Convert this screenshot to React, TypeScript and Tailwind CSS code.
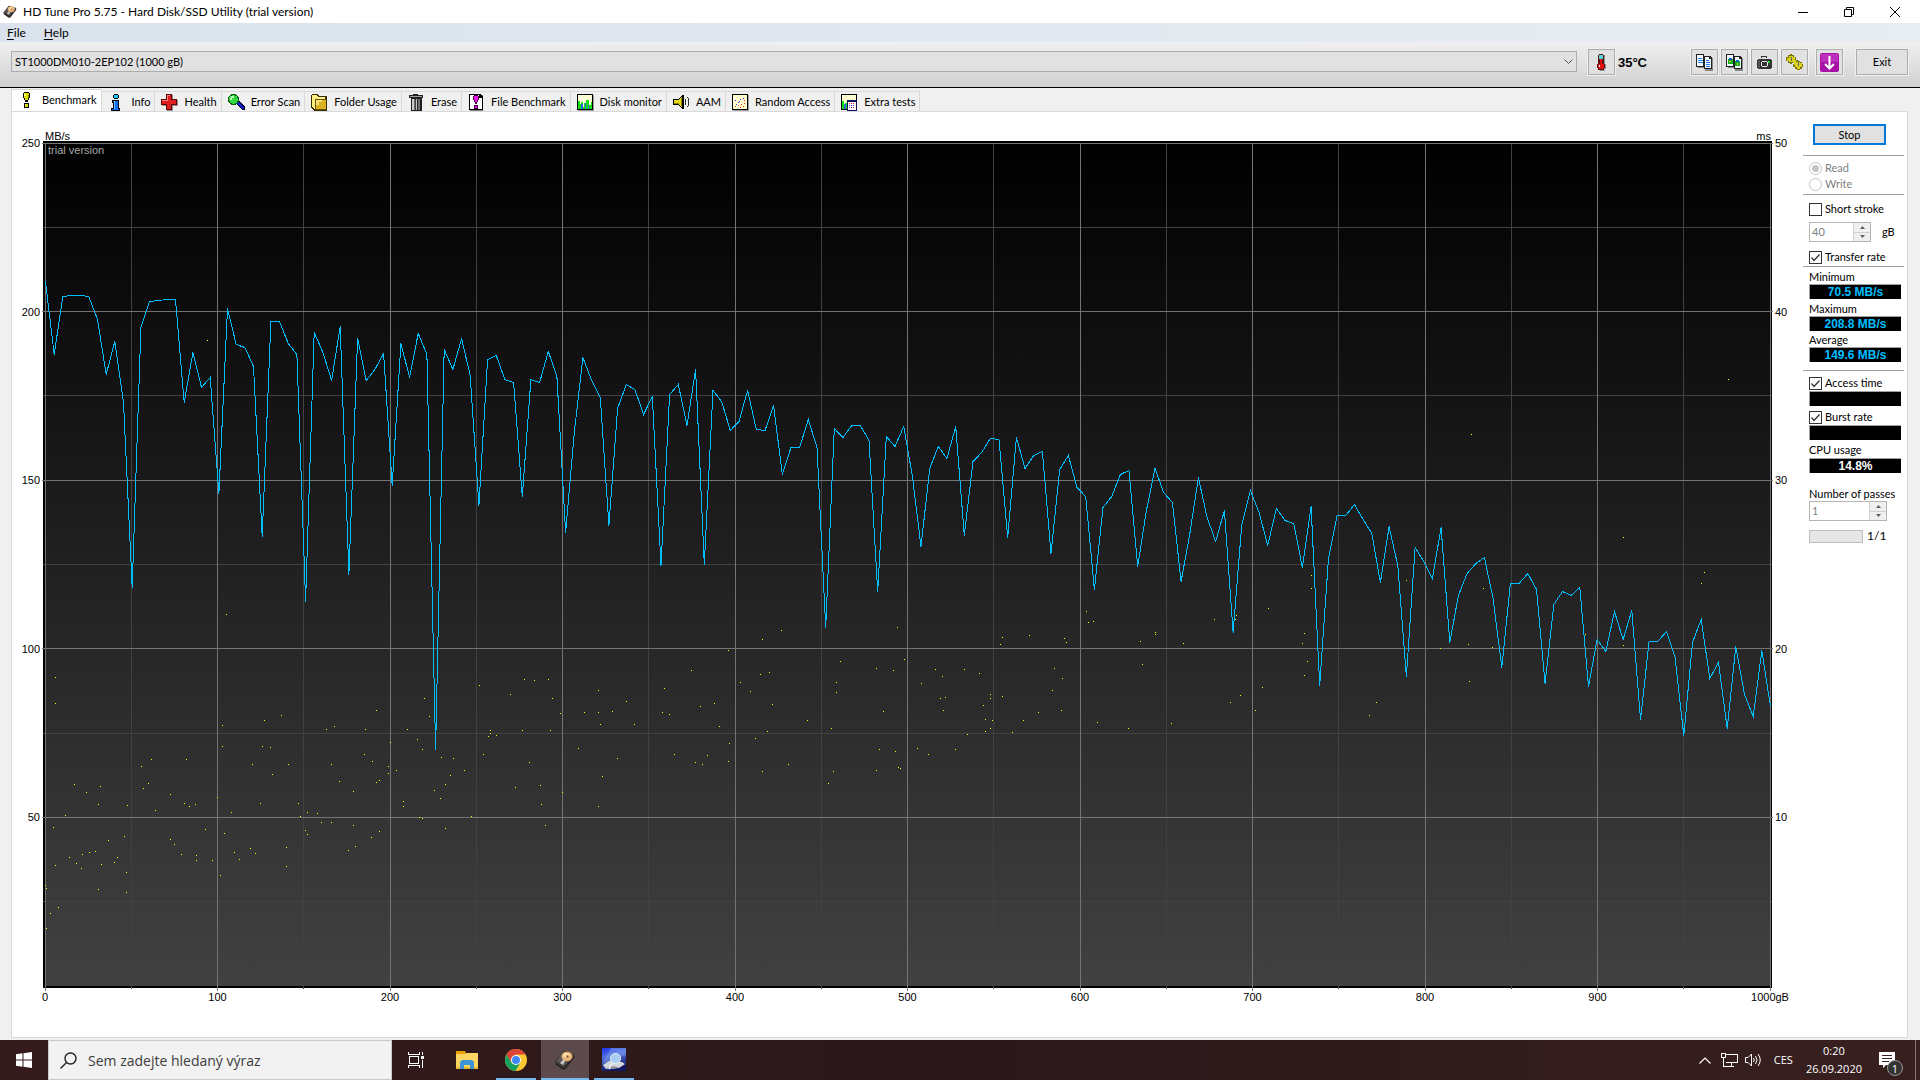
import { useState } from 'react';
import type { ReactNode } from 'react';

// Plot area in chart units
const PLOT_W = 1725;
const PLOT_H = 843;

// Transfer rate samples, measured down from the 250 MB/s line
const TRANSFER = [
  138, 211, 153, 152, 152, 153, 176, 231, 198, 259, 444, 184, 158, 157, 156, 156, 259, 209, 244, 234,
  350, 165, 201, 204, 223, 393, 178, 178, 200, 211, 458, 189, 209, 237, 183, 431, 195, 237, 226, 210,
  342, 200, 234, 190, 211, 606, 206, 226, 195, 232, 362, 216, 212, 236, 239, 353, 236, 239, 208, 233,
  389, 289, 214, 237, 254, 382, 265, 241, 246, 271, 253, 422, 251, 241, 282, 226, 421, 247, 258, 287,
  278, 247, 286, 287, 262, 331, 304, 304, 276, 304, 484, 285, 294, 282, 282, 297, 448, 293, 303, 283,
  332, 403, 325, 303, 315, 283, 392, 318, 309, 295, 296, 394, 294, 325, 312, 308, 410, 326, 312, 344,
  353, 446, 364, 353, 331, 327, 423, 367, 325, 349, 359, 438, 391, 334, 374, 398, 367, 489, 382, 347,
  369, 402, 365, 377, 380, 424, 363, 542, 416, 372, 372, 361, 376, 390, 439, 383, 422, 533, 404, 418,
  435, 384, 499, 452, 430, 420, 414, 455, 524, 440, 440, 430, 446, 540, 461, 448, 452, 444, 543, 496,
  508, 468, 496, 467, 576, 498, 498, 488, 514, 592, 499, 476, 535, 519, 585, 503, 551, 573, 507, 563,
];

// Access time hits as [x, y]
const ACCESS: [number, number][] = [
  [10, 534], [10, 560], [177, 582], [219, 577], [236, 572], [281, 586], [289, 583], [320, 586], [331, 567], [362, 586],
  [372, 596], [379, 555], [384, 573], [377, 606], [434, 542], [465, 551], [479, 536], [489, 537], [503, 536], [507, 555],
  [515, 570], [539, 569], [553, 547], [553, 569], [555, 581], [567, 568], [581, 558], [589, 581], [619, 545], [617, 569],
  [624, 571], [177, 603], [217, 603], [225, 604], [207, 621], [227, 631], [243, 621], [286, 621], [294, 638], [308, 648],
  [319, 611], [327, 618], [331, 639], [334, 637], [343, 623], [343, 630], [351, 627], [345, 599], [358, 658], [358, 663],
  [396, 614], [408, 615], [405, 632], [419, 627], [400, 641], [389, 647], [395, 655], [400, 685], [374, 674], [377, 675],
  [426, 673], [438, 611], [443, 593], [445, 587], [445, 590], [451, 592], [477, 587], [484, 619], [505, 587], [470, 644],
  [495, 642], [496, 661], [500, 682], [517, 649], [533, 605], [557, 633], [572, 615], [553, 663], [29, 641], [41, 649],
  [55, 643], [53, 661], [82, 662], [20, 672], [8, 684], [63, 697], [79, 693], [50, 708], [44, 709], [37, 711],
  [24, 714], [31, 720], [36, 725], [10, 722], [56, 721], [69, 719], [72, 714], [81, 729], [81, 749], [53, 746],
  [0, 742], [1, 745], [13, 764], [5, 770], [1, 785], [106, 616], [96, 623], [103, 640], [98, 645], [125, 651],
  [141, 616], [139, 660], [144, 663], [150, 661], [110, 667], [125, 696], [129, 701], [136, 711], [151, 712], [151, 717],
  [167, 717], [160, 686], [179, 690], [172, 654], [186, 669], [175, 732], [189, 709], [194, 716], [205, 705], [210, 710],
  [215, 660], [241, 704], [241, 723], [253, 660], [255, 673], [262, 669], [272, 670], [260, 687], [262, 691], [276, 679],
  [286, 679], [308, 682], [334, 688], [326, 694], [310, 703], [303, 707], [162, 197], [181, 471], [646, 527], [655, 563],
  [669, 560], [674, 583], [683, 507], [695, 539], [705, 548], [715, 531], [724, 529], [727, 561], [717, 496], [736, 487],
  [762, 577], [722, 588], [710, 595], [684, 600], [629, 611], [650, 619], [657, 621], [662, 612], [683, 618], [717, 628],
  [743, 621], [795, 518], [791, 539], [791, 549], [786, 585], [788, 628], [783, 640], [831, 525], [848, 527], [859, 516],
  [852, 484], [838, 568], [834, 606], [850, 608], [831, 627], [853, 624], [855, 625], [876, 540], [872, 605], [883, 611],
  [890, 526], [897, 533], [895, 555], [900, 554], [898, 567], [910, 606], [919, 526], [922, 591], [934, 530], [938, 562],
  [945, 551], [945, 555], [940, 576], [947, 577], [945, 585], [940, 588], [957, 553], [957, 494], [955, 501], [967, 589],
  [978, 577], [984, 492], [993, 569], [1009, 525], [1007, 547], [1017, 535], [1016, 567], [1019, 495], [1021, 499], [1041, 468],
  [1043, 479], [1048, 478], [1052, 579], [1083, 585], [1095, 498], [1097, 521], [1110, 489], [1110, 491], [1138, 500], [1126, 580],
  [1169, 476], [1190, 476], [1191, 472], [1185, 559], [1195, 552], [1210, 567], [1217, 544], [1223, 465], [1266, 432], [1266, 445],
  [1259, 490], [1257, 500], [1262, 518], [1259, 532], [1361, 437], [1331, 559], [1324, 572], [1395, 505], [1423, 501], [1424, 538],
  [1438, 445], [1447, 504], [1426, 291], [1540, 491], [1578, 502], [1578, 394], [1656, 440], [1659, 429], [1683, 236],
];

function Chart() {
  const points = TRANSFER.map((y, i) => `${((i * PLOT_W) / (TRANSFER.length - 1) + 0.5).toFixed(1)},${y + 0.5}`).join(' ');
  const cols = Array.from({ length: 21 }, (_, i) => i);
  const rows = Array.from({ length: 11 }, (_, i) => i);
  return (
    <svg viewBox="0 0 1732 850" preserveAspectRatio="none" className="block h-full w-full" shapeRendering="crispEdges">
      <defs>
        <linearGradient id="plot" x1="0" y1="0" x2="0" y2="1">
          <stop offset="0" stopColor="#000" />
          <stop offset="1" stopColor="#414141" />
        </linearGradient>
      </defs>
      <rect x="1" y="0" width="1729" height="847" fill="#000" />
      <rect x="3" y="2" width="1725" height="843" fill="url(#plot)" />
      <g transform="translate(3 2)">
        {cols.map((i) =>
          i % 2 ? (
            <rect key={i} x={Math.floor((i * PLOT_W) / 20)} y={0} width={1} height={846} fill="#414141" />
          ) : null
        )}
        {rows.map((i) =>
          i % 2 ? (
            <rect key={i} x={-2} y={Math.floor((i * PLOT_H) / 10)} width={1729} height={1} fill="#414141" />
          ) : null
        )}
        {cols.map((i) =>
          i % 2 ? null : (
            <rect key={i} x={Math.floor((i * PLOT_W) / 20)} y={0} width={1} height={848} fill="#747474" />
          )
        )}
        {rows.map((i) =>
          i % 2 || i === 10 ? null : (
            <rect key={i} x={-3} y={Math.floor((i * PLOT_H) / 10)} width={1731} height={1} fill="#747474" />
          )
        )}
        <polyline points={points} fill="none" stroke="#00bfff" strokeWidth="1" vectorEffect="non-scaling-stroke" />
        {ACCESS.map(([x, y], i) => (
          <rect key={i} x={x} y={y} width={1} height={1} fill="#ffff00" />
        ))}
      </g>
    </svg>
  );
}

function Icon({ children }: { children: ReactNode }) {
  return (
    <svg viewBox="0 0 17 17" className="size-[17px] shrink-0" shapeRendering="crispEdges">
      {children}
    </svg>
  );
}

const tabIcons: Record<string, ReactNode> = {
  Benchmark: (
    <Icon>
      <path d="M5 0h5v1h1v5h-1v2H9v2H6V8H5V6H4V1h1zM5 11h5v5H5z" fill="#000" />
      <path d="M5 1h5v5H9v2H7V8H6V6H5zM6 12h3v3H6z" fill="#d8d800" />
      <path d="M5 2h2v2H5zM6 12h1v1H6z" fill="#ffff90" />
      <path d="M9 3h1v3H9z" fill="#888800" />
    </Icon>
  ),
  Info: (
    <Icon>
      <path d="M6 0h4v1h1v3h-1v1H6V4H5V1h1zM4 6h7v8h1v3H3v-3h2V9H4z" fill="#000" />
      <path d="M6 1h4v3H6z" fill="#20c8ff" />
      <path d="M5 7h5v8h1v1H4v-1h2V8H5z" fill="#1070f0" />
      <path d="M6 7h1v8H6z" fill="#70c0ff" />
    </Icon>
  ),
  Health: (
    <Icon>
      <path d="M6 1h6v5h5v6h-5v5H6v-5H1V6h5z" fill="#9a8a8a" />
      <path d="M5 0h6v5h5v6h-5v5H5v-5H0V5h5z" fill="#5c0808" />
      <path d="M6 1h4v5h5v4h-5v5H6v-5H1V6h5z" fill="#e02020" />
      <path d="M6 1h3v1H7v5H1V6h5z" fill="#ff8080" />
    </Icon>
  ),
  'Error Scan': (
    <Icon>
      <path d="M9 8l2-1 6 6v3h-3L8 10z" fill="#000030" />
      <path d="M9 9l1-1 6 6-1 2z" fill="#1020d0" />
      <circle cx="5.500" cy="5.500" r="5.500" fill="#0a5a10" />
      <circle cx="5.500" cy="5.500" r="4.500" fill="#30d840" />
      <path d="M3 2h3v2H4v2H2V4h1z" fill="#b8ffb8" />
    </Icon>
  ),
  'Folder Usage': (
    <Icon>
      <path d="M1 0h6l1 2h8v15H3l-3-3V1z" fill="#3a2c00" />
      <path d="M1 1h5l1 2h7v2H4v10l-3-2z" fill="#fff080" />
      <path d="M4 5h11v11H4z" fill="#6a5408" />
      <path d="M5 6h10v9H5z" fill="#d8b020" />
      <path d="M5 6h6v2H8v3H5z" fill="#f8e070" />
    </Icon>
  ),
  Erase: (
    <Icon>
      <path d="M5 0h5v1h5v3h-1v13H3V4H1V1h4z" fill="#202020" />
      <path d="M2 2h12v1H2z" fill="#a0a0a0" />
      <path d="M4 5h2v11H4zM8 5h1v11H8z" fill="#c8c8c8" />
      <path d="M6 5h1v11H6zM10 5h2v11h-2z" fill="#707070" />
      <path d="M7 5h1v11H7z" fill="#404040" />
    </Icon>
  ),
  'File Benchmark': (
    <Icon>
      <path d="M2 1h13v16H2z" fill="#808080" />
      <path d="M1 0h11l3 3v13H1z" fill="#000" />
      <path d="M2 1h9v3h3v11H2z" fill="#fff" />
      <path d="M6 1h4v1h1v4h-1v2H9v2H7V8H6V6H5V2h1zM6 11h4v4H6z" fill="#400040" />
      <path d="M6 2h4v4H9v2H7V6H6zM7 12h2v2H7z" fill="#e818e8" />
    </Icon>
  ),
  'Disk monitor': (
    <Icon>
      <path d="M1 1h16v16H1z" fill="#a0a0a0" />
      <path d="M0 0h16v16H0z" fill="#000" />
      <path d="M1 1h14v14H1z" fill="#ffffd8" />
      <path d="M1 7h2v3h1V8h2v5h1V9h2V6h3v5h2V8h1v7H1z" fill="#10e010" />
      <path d="M4 10h2v5H4zM8 9h1v6H8zM11 11h1v4h-1z" fill="#3060e0" />
    </Icon>
  ),
  AAM: (
    <Icon>
      <path d="M9 1h2v14H9l-4-4H0V5h5z" fill="#000" />
      <path d="M8 3h1v10H8L5 10H1V6h4z" fill="#e8d818" />
      <path d="M8 4h1v8H8zM1 9h5v1H1z" fill="#908000" />
      <path d="M12 5h1v6h-1zM14 3h1v1h1v8h-1v1h-1v-1h1V4h-1z" fill="#303030" />
    </Icon>
  ),
  'Random Access': (
    <Icon>
      <path d="M1 1h16v16H1z" fill="#a0a0a0" />
      <path d="M0 0h16v16H0z" fill="#000" />
      <path d="M1 1h14v14H1z" fill="#ffffd0" />
      <path d="M3 6h1v1H3zM6 8h1v1H6zM8 5h1v1H8zM11 4h1v1h-1zM4 10h1v1H4zM7 7h1v1H7z" fill="#2030ff" />
      <path d="M3 12h1v1H3zM6 11h1v1H6zM9 10h1v1H9zM12 9h1v1h-1zM8 13h1v1H8zM11 12h1v1h-1zM12 6h1v1h-1z" fill="#ff2020" />
    </Icon>
  ),
  'Extra tests': (
    <Icon>
      <path d="M0 0h16v16H0z" fill="#000" />
      <path d="M1 1h14v14H1z" fill="#ffffd0" />
      <path d="M1 7h2v3h1V9h2v6H1z" fill="#10e010" />
      <path d="M3 10h2v5H3z" fill="#3060e0" />
      <path d="M6 6h10v11H6z" fill="#101060" />
      <path d="M7 8h8v8H7z" fill="#fff" />
      <path d="M8 9h1v1H8zM10 9h1v1h-1zM12 9h1v1h-1zM8 13h1v1H8zM12 13h1v1h-1z" fill="#ff2020" />
      <path d="M8 11h1v1H8zM10 11h1v1h-1zM12 11h1v1h-1zM10 13h1v1h-1z" fill="#2030ff" />
    </Icon>
  ),
};

function DriveIcon({ className }: { className: string }) {
  return (
    <svg viewBox="0 0 22 20" className={className}>
      <path d="M1 11L9 1l11 3 1 3-9 12-3 1-8-6z" fill="#3b3735" />
      <path d="M2 11L9 2l10 3-9 11z" fill="#5c5754" />
      <ellipse cx="13" cy="6.500" rx="5.500" ry="4.800" fill="#e8b070" />
      <ellipse cx="12.500" cy="5.500" rx="3.500" ry="2.500" fill="#ffdcae" />
      <circle cx="13.500" cy="6.500" r="1.300" fill="#8a5a2c" />
      <path d="M6 13l4-4 1 2-2 4z" fill="#c8c8c8" />
      <path d="M2 14l8 5 10-12" fill="none" stroke="#1d1a19" />
    </svg>
  );
}

function CopyIcon({ picture }: { picture?: boolean }) {
  return (
    <Icon>
      <path d="M2 2h7v12H2zM9 4h8v13H9z" fill="#888" />
      <path d="M0 0h8v13H0z" fill="#222" />
      <path d="M1 1h6v11H1z" fill="#f0f8ff" />
      <path d="M8 2h6l2 2v11H8z" fill="#222" />
      <path d="M9 3h4v2h2v9H9z" fill="#f0f8ff" />
      {picture ? (
        <>
          <path d="M2 5h5v5H2zM9 7h5v5H9z" fill="#10b020" />
          <path d="M3 4h3v2H3zM10 6h3v2h-3z" fill="#1060d0" />
          <path d="M3 7h2v1H3zM11 9h1v2h-1z" fill="#f0d020" />
        </>
      ) : (
        <path d="M2 4h4v1H2zM2 6h5v1H2zM2 8h5v1H2zM10 6h3v1h-3zM10 8h4v1h-4zM10 10h4v1h-4zM10 12h4v1h-4z" fill="#2080e0" />
      )}
    </Icon>
  );
}

function ToolButton({ label, children }: { label: string; children: ReactNode }) {
  return (
    <button
      type="button"
      aria-label={label}
      className="flex h-[26px] w-[27px] items-center justify-center border border-[#adadad] bg-[#e1e1e1] outline outline-[#f0f0f0]"
    >
      {children}
    </button>
  );
}

function Toolbar() {
  return (
    <div className="flex h-[46px] items-start border-b border-black bg-gradient-to-b from-[#f0f0f0] to-[#d0d0d0] pt-[7px] pr-[12px] pl-[11px]">
      <div className="relative mt-[2px] flex-1">
        <select
          aria-label="Drive"
          className="h-[21px] w-full appearance-none rounded-none border border-[#adadad] bg-[#e1e1e1] px-[3px] font-['Lato',sans-serif] text-[11px] leading-[18px]"
        >
          <option>ST1000DM010-2EP102 (1000 gB)</option>
        </select>
        <svg viewBox="0 0 9 6" className="pointer-events-none absolute top-2 right-1 h-[6px] w-[9px]">
          <path d="M0.500 0.500l4 4 4-4" fill="none" stroke="#555" />
        </svg>
      </div>
      <div className="ml-[11px] flex items-center gap-[3px]">
        <ToolButton label="Temperature">
          <Icon>
            <path d="M7 1h5v9h1v5h-1v2H7v-1h5z" fill="#909090" />
            <path d="M6 0h4v1h1v9h1v4h-1v2H5v-2H4v-4h1V1h1z" fill="#601010" />
            <path d="M6 1h4v4H6z" fill="#50d8e8" />
            <path d="M7 5h2v5h2v4h-1v1H6v-1H5v-4h2z" fill="#e01010" />
            <path d="M6 11h1v2H6z" fill="#fff" />
          </Icon>
        </ToolButton>
        <span className="pt-px text-[13px] font-bold">35°C</span>
      </div>
      <div className="ml-[44px] flex gap-[3px]">
        <ToolButton label="Copy text">
          <CopyIcon />
        </ToolButton>
        <ToolButton label="Copy image">
          <CopyIcon picture />
        </ToolButton>
        <ToolButton label="Save screenshot">
          <Icon>
            <path d="M5 2h6v2h-1V3H6v1H5zM2 5h13v1h1v8h-1v1H2v-1H1V6h1z" fill="#333" />
            <path d="M2 6h2v8H2z" fill="#555" />
            <circle cx="8.500" cy="10" r="3.500" fill="#eee" />
            <circle cx="8.500" cy="10" r="2.500" fill="#333" />
            <path d="M12 7h2v2h-2z" fill="#20e020" />
          </Icon>
        </ToolButton>
        <ToolButton label="Options">
          <Icon>
            <path d="M2 1h2V0h2v1h2v2h2v4H8v2H6v1H4V9H2V7H0V3h2z" fill="#7a7200" />
            <path d="M8 7h2V6h2v1h2v1h2v2h1v3h-1v2h-2v1h-3v-1H9v-2H7v-3h1z" fill="#7a7200" />
            <path d="M3 2h4v1h2v4H7v1H3V7H1V4h2zM9 8h5v1h2v4h-2v2h-3v-2H9v-2H8v-2h1z" fill="#d8d020" />
            <path d="M7 6h3v3H7z" fill="#d8d020" />
            <path d="M5 3h1v4H5zM12 8h1v4h-1z" fill="#606070" />
          </Icon>
        </ToolButton>
        <div className="ml-[5px] flex">
          <ToolButton label="Update">
            <svg viewBox="0 0 19 19" className="size-[19px]">
              <rect width="19" height="19" rx="2" fill="#a810a8" />
              <path d="M1 1h17v8H1z" fill="#bc30bc" />
              <path d="M9.500 3v12M5 11l4.500 4.500L14 11" fill="none" stroke="#fff" strokeWidth="2" />
            </svg>
          </ToolButton>
        </div>
      </div>
      <button
        type="button"
        className="ml-[13px] h-[26px] w-[52px] border border-[#adadad] bg-[#e1e1e1] font-['Lato',sans-serif] text-[11px] outline outline-[#f0f0f0]"
      >
        Exit
      </button>
    </div>
  );
}

function Tabs({ active, onChange }: { active: string; onChange: (name: string) => void }) {
  return (
    <div role="tablist" className="flex h-[23px] items-end pl-[11px] font-['Lato',sans-serif]">
      {Object.keys(tabIcons).map((name) =>
        name === active ? (
          <button
            key={name}
            type="button"
            role="tab"
            aria-selected="true"
            className="-mb-px flex h-[23px] items-center gap-[6px] border border-b-0 border-[#d9d9d9] bg-white pr-[5px] pb-[2px] pl-[7px]"
          >
            {tabIcons[name]}
            {name}
          </button>
        ) : (
          <button
            key={name}
            type="button"
            role="tab"
            aria-selected="false"
            onClick={() => onChange(name)}
            className="flex h-[20px] items-center gap-[6px] border-t border-r border-[#d9d9d9] pt-[2px] pr-[4px] pl-[6px]"
          >
            {tabIcons[name]}
            {name}
          </button>
        )
      )}
    </div>
  );
}

function Rule() {
  return <hr className="-ml-[6px] -mr-[3px] border-[#a0a0a0]" />;
}

function Check({ label, checked, onChange }: { label: string; checked: boolean; onChange: () => void }) {
  return (
    <label className="flex h-[14px] items-center gap-[3px] whitespace-nowrap">
      <span className="relative flex">
        <input
          type="checkbox"
          checked={checked}
          onChange={onChange}
          className="size-[13px] appearance-none border border-[#333] bg-white"
        />
        {checked && (
          <svg viewBox="0 0 13 13" className="pointer-events-none absolute inset-0 size-[13px]">
            <path d="M2.500 6.500L5 9.500l5.500-6" fill="none" stroke="#333" strokeWidth="1.300" />
          </svg>
        )}
      </span>
      {label}
    </label>
  );
}

function Value({ children, white }: { children?: ReactNode; white?: boolean }) {
  return (
    <div
      className={`flex h-[15px] items-center justify-center border-t border-l border-[#a0a0a0] bg-black font-['Liberation_Sans',Arial,sans-serif] text-[12px] font-bold ${
        white ? 'text-white' : 'text-[#00bfff]'
      }`}
    >
      {children}
    </div>
  );
}

function Spinner({ label, value, wide }: { label: string; value: string; wide?: boolean }) {
  return (
    <div className={`flex h-[20px] border border-[#b5b5b5] ${wide ? 'w-[78px]' : 'w-[62px]'}`}>
      <input
        type="text"
        aria-label={label}
        defaultValue={value}
        disabled
        className="w-0 flex-1 bg-white px-[2px] text-[11px] text-[#808080]"
      />
      <div className="flex w-[17px] flex-col gap-px border-l border-[#d0d0d0] bg-[#d0d0d0]">
        <button type="button" disabled aria-label={`Increase ${label}`} className="flex flex-1 items-center justify-center bg-[#f0f0f0]">
          <svg viewBox="0 0 5 3" className="h-[3px] w-[5px]">
            <path d="M0 3l2.500-3L5 3z" fill="#606060" />
          </svg>
        </button>
        <button type="button" disabled aria-label={`Decrease ${label}`} className="flex flex-1 items-center justify-center bg-[#f0f0f0]">
          <svg viewBox="0 0 5 3" className="h-[3px] w-[5px]">
            <path d="M0 0l2.500 3L5 0z" fill="#606060" />
          </svg>
        </button>
      </div>
    </div>
  );
}

function Radio({ label, checked }: { label: string; checked?: boolean }) {
  return (
    <label className="flex h-4 items-center gap-[3px] text-[#808080]">
      <span className="relative flex">
        <input
          type="radio"
          name="mode"
          disabled
          defaultChecked={checked}
          className="size-[13px] appearance-none rounded-full border border-[#c4c4c4] bg-white"
        />
        {checked && <span className="pointer-events-none absolute inset-[3px] rounded-full bg-[#c4c4c4]" />}
      </span>
      {label}
    </label>
  );
}

function Sidebar() {
  const [shortStroke, setShortStroke] = useState(false);
  const [transfer, setTransfer] = useState(true);
  const [access, setAccess] = useState(true);
  const [burst, setBurst] = useState(true);
  return (
    <aside className="w-[104px] shrink-0 pt-[12px] pr-[6px] pl-[6px] font-['Lato',sans-serif] leading-[14px]">
      <button type="button" className="ml-1 h-[21px] w-[73px] border-2 border-[#0078d7] bg-[#e1e1e1]">
        Stop
      </button>
      <div className="mt-[10px]">
        <Rule />
      </div>
      <div className="mt-1 mb-[2px]">
        <Radio label="Read" checked />
        <Radio label="Write" />
      </div>
      <Rule />
      <div className="mt-[7px] mb-[6px]">
        <Check label="Short stroke" checked={shortStroke} onChange={() => setShortStroke(!shortStroke)} />
      </div>
      <div className="flex items-center gap-[11px]">
        <Spinner label="Short stroke size" value="40" />
        gB
      </div>
      <div className="mt-2 mb-[2px]">
        <Check label="Transfer rate" checked={transfer} onChange={() => setTransfer(!transfer)} />
      </div>
      <Rule />
      <p className="mt-[3px]">Minimum</p>
      <Value>70.5 MB/s</Value>
      <p className="mt-[3px]">Maximum</p>
      <Value>208.8 MB/s</Value>
      <p className="mt-[2px]">Average</p>
      <Value>149.6 MB/s</Value>
      <div className="mt-2 mb-[5px]">
        <Rule />
      </div>
      <Check label="Access time" checked={access} onChange={() => setAccess(!access)} />
      <div className="mt-px mb-1">
        <Value />
      </div>
      <Check label="Burst rate" checked={burst} onChange={() => setBurst(!burst)} />
      <div className="mt-px mb-[3px]">
        <Value />
      </div>
      <p>CPU usage</p>
      <div className="mt-px">
        <Value white>14.8%</Value>
      </div>
      <p className="mt-[14px] whitespace-nowrap">Number of passes</p>
      <Spinner label="Number of passes" value="1" wide />
      <div className="mt-2 flex items-center gap-1">
        <div role="progressbar" aria-label="Pass" aria-valuenow={0} className="h-[13px] w-[54px] border border-[#bcbcbc] bg-[#e6e6e6]" />
        <span className="text-[12px]">1/1</span>
      </div>
    </aside>
  );
}

function Benchmark() {
  const left = [250, 200, 150, 100, 50];
  const right = [50, 40, 30, 20, 10];
  const bottom = ['0', '100', '200', '300', '400', '500', '600', '700', '800', '900', '1000gB'];
  return (
    <div className="mr-[12px] ml-[11px] flex min-h-0 flex-1 border border-[#d9d9d9] bg-white">
      <div className="grid min-w-0 flex-1 grid-cols-[30px_minmax(0,1fr)_29px] grid-rows-[29px_minmax(0,1fr)_46px]">
        <div />
        <div className="flex items-end justify-between pr-[3px] pl-[3px] leading-[10px]">
          <span>MB/s</span>
          <span>ms</span>
        </div>
        <div />

        {/* Rate scale; the last slot is the unlabelled zero line */}
        <div className="-mt-[5px] -mb-[2px] flex flex-col justify-between pr-[2px] text-right leading-[14px]">
          {left.map((v) => (
            <span key={v}>{v}</span>
          ))}
          <span>&nbsp;</span>
        </div>
        <div className="relative min-h-0">
          <Chart />
          <span className="absolute top-[2px] left-[6px] leading-[14px] text-[#a8a8a8]">trial version</span>
        </div>
        <div className="-mt-[5px] -mb-[2px] flex flex-col justify-between pl-px leading-[14px]">
          {right.map((v) => (
            <span key={v}>{v}</span>
          ))}
          <span>&nbsp;</span>
        </div>

        <div />
        <div className="flex justify-between pr-[4px] pl-[3px] leading-[13px]">
          {bottom.map((v) => (
            <span key={v} className="flex w-0 justify-center">
              {v}
            </span>
          ))}
        </div>
        <div />
      </div>
      <Sidebar />
    </div>
  );
}

function Taskbar() {
  return (
    <footer className="flex h-10 shrink-0 bg-gradient-to-r from-[#351b1d] via-[#2a1719] to-[#38201f] font-['Open_Sans',sans-serif] text-white">
      <button type="button" aria-label="Start" className="flex w-12 items-center justify-center">
        <svg viewBox="0 0 16 16" className="size-4" fill="#fff">
          <path d="M0 2.200L6.500 1.300V7.500H0zM7.500 1.200L16 0v7.500H7.500zM0 8.500h6.500v6.200L0 13.800zM7.500 8.500H16V16l-8.500-1.200z" />
        </svg>
      </button>
      <label className="flex w-[344px] items-center gap-[11px] border border-[#c8c8c8] bg-[#f2f2f2] pl-[11px]">
        <svg viewBox="0 0 17 17" className="size-[17px]" fill="none" stroke="#222" strokeWidth="1.400">
          <circle cx="10.500" cy="6.500" r="5.500" />
          <path d="M6.500 10.500L0.500 16.500" />
        </svg>
        <input
          type="text"
          aria-label="Search"
          placeholder="Sem zadejte hledaný výraz"
          className="w-0 flex-1 text-[14px] placeholder:text-[#3c3c3c]"
        />
      </label>
      <button type="button" aria-label="Task view" className="flex w-12 items-center justify-center">
        <svg viewBox="0 0 16 16" className="size-4" fill="none" stroke="#fff" shapeRendering="crispEdges">
          <path d="M1.500 4.500h9v7h-9zM0.500 0v2.500h11V0M0.500 16v-2.500h11V16M14.500 0v3M14.500 8v8" />
          <path d="M13 4h3v3h-3z" fill="#fff" stroke="none" />
        </svg>
      </button>
      <button type="button" aria-label="File Explorer" className="ml-[3px] flex w-12 items-center justify-center">
        <svg viewBox="0 0 22 20" className="h-5 w-[22px]">
          <path d="M0 1h9l1 2h-1v3H0z" fill="#e8a205" />
          <path d="M0 4h8l2-1h12v16H0z" fill="#ffd562" />
          <path d="M0 17h22v2H0z" fill="#efb934" />
          <path d="M4 19v-7l2-2h10l2 2v7h-4v-4H8v4z" fill="#3c93d6" />
        </svg>
      </button>
      <button type="button" aria-label="Chrome" className="mx-[5px] flex w-10 flex-col items-center justify-between border-b-2 border-[#76b9ed] pt-[9px]">
        <svg viewBox="0 0 22 22" className="size-[22px]">
          <circle cx="11" cy="11" r="11" fill="#fcc934" />
          <path d="M1.500 5.500A11 11 0 0 1 20.500 5.500H11l-5 8z" fill="#dc4437" />
          <path d="M1.500 5.500A11 11 0 0 0 10.500 22l5-8.500H6.200z" fill="#16a05d" />
          <circle cx="11" cy="11" r="5" fill="#fff" />
          <circle cx="11" cy="11" r="4" fill="#4286f5" />
        </svg>
      </button>
      <button type="button" aria-label="HD Tune Pro" className="flex w-12 justify-center border-b-2 border-[#76b9ed] bg-[#5c4a4c] pt-[10px]">
        <DriveIcon className="h-5 w-[22px]" />
      </button>
      <button type="button" aria-label="Disk info" className="mx-[5px] flex w-10 justify-center border-b-2 border-[#76b9ed] pt-2">
        <svg viewBox="0 0 24 24" className="size-6">
          <defs>
            <linearGradient id="disk" x1="0" y1="0" x2="0.300" y2="1">
              <stop offset="0" stopColor="#2030e8" />
              <stop offset="0.400" stopColor="#5070e0" />
              <stop offset="1" stopColor="#101860" />
            </linearGradient>
          </defs>
          <rect width="24" height="23" fill="url(#disk)" />
          <path d="M9 0h15v7L0 16z" fill="#90b0f0" fillOpacity="0.400" />
          <path d="M1 17l6-4 13 1 3 2-6 4-13 1z" fill="#d4d8dc" />
          <path d="M4 20l5-2 8 1-5 2z" fill="#8a9098" />
          <circle cx="13.500" cy="10.500" r="5" fill="#a8cdf0" stroke="#e8f0f8" />
          <path d="M10 15l-3 6" stroke="#e8e8e8" strokeWidth="2" />
        </svg>
      </button>

      <div className="ml-auto flex items-center text-[11px]">
        <button type="button" aria-label="Show hidden icons">
          <svg viewBox="0 0 12 7" className="h-[7px] w-3">
            <path d="M0.500 6.500L6 1l5.500 5.500" fill="none" stroke="#fff" strokeWidth="1.200" />
          </svg>
        </button>
        <svg viewBox="0 0 17 14" className="ml-[10px] h-[14px] w-[17px]" fill="none" stroke="#fff" shapeRendering="crispEdges">
          <path d="M5 1.500h11.500v8H5M2.500 5v8.500H13M10.500 10v3M0.500 0.500h4v4h-4z" />
        </svg>
        <svg viewBox="0 0 17 14" className="ml-[7px] h-[14px] w-[17px]" fill="none" stroke="#fff">
          <path d="M0.500 4.500h2.500l3.500-3.500v12L3 9.500H0.500zM8.500 5q1.500 2 0 4M10.500 3q3 4 0 8M13 1q4.500 6 0 12" />
        </svg>
        <span className="ml-3">CES</span>
        <button type="button" className="ml-[13px] text-center leading-[18px]">
          0:20
          <br />
          26.09.2020
        </button>
        <button type="button" aria-label="Notifications" className="relative mr-[20px] ml-[17px]">
          <svg viewBox="0 0 16 16" className="size-4">
            <path d="M0 0h16v13H7l-3 3v-3H0z" fill="#fff" />
            <path d="M3 3.500h10M3 6.500h10M3 9.500h7" stroke="#38201f" />
          </svg>
          <span className="absolute -right-2 -bottom-2 flex size-4 items-center justify-center rounded-full border border-[#999] bg-[#333] text-[11px] leading-none">
            1
          </span>
        </button>
        <span className="mr-1 h-10 w-px bg-[#8a7878]" />
      </div>
    </footer>
  );
}

function App() {
  const [tab, setTab] = useState('Benchmark');
  return (
    <div className="flex h-screen flex-col overflow-hidden bg-[#f0f0f0] font-['Liberation_Sans',Arial,sans-serif] text-[11px] text-black">
      <header className="flex h-[23px] items-center bg-white pl-[3px] font-['Lato',sans-serif]">
        <DriveIcon className="h-[13px] w-[14px]" />
        <h1 className="ml-[6px] text-[12px]">HD Tune Pro 5.75 - Hard Disk/SSD Utility (trial version)</h1>
        <div className="mr-5 ml-auto flex items-center gap-9">
          <button type="button" aria-label="Minimize">
            <svg viewBox="0 0 10 10" className="size-[10px]">
              <path d="M0 5.500h10" stroke="#000" />
            </svg>
          </button>
          <button type="button" aria-label="Restore">
            <svg viewBox="0 0 10 10" className="size-[10px]" fill="none" stroke="#000">
              <path d="M0.500 2.500h7v7h-7zM2.500 2.500v-2h7v7h-2" />
            </svg>
          </button>
          <button type="button" aria-label="Close">
            <svg viewBox="0 0 10 10" className="size-[10px]">
              <path d="M0 0l10 10M10 0L0 10" stroke="#000" />
            </svg>
          </button>
        </div>
      </header>
      <nav className="flex h-[19px] items-center gap-[18px] bg-gradient-to-r from-[#dae3ed] to-[#e8edf2] pl-[7px] font-['Lato',sans-serif] text-[12px]">
        <button type="button">
          <span className="underline underline-offset-2">F</span>ile
        </button>
        <button type="button">
          <span className="underline underline-offset-2">H</span>elp
        </button>
      </nav>
      <Toolbar />
      <main className="flex min-h-0 flex-1 flex-col pb-[2px]">
        <Tabs active={tab} onChange={setTab} />
        <Benchmark />
      </main>
      <Taskbar />
    </div>
  );
}

export default App;
